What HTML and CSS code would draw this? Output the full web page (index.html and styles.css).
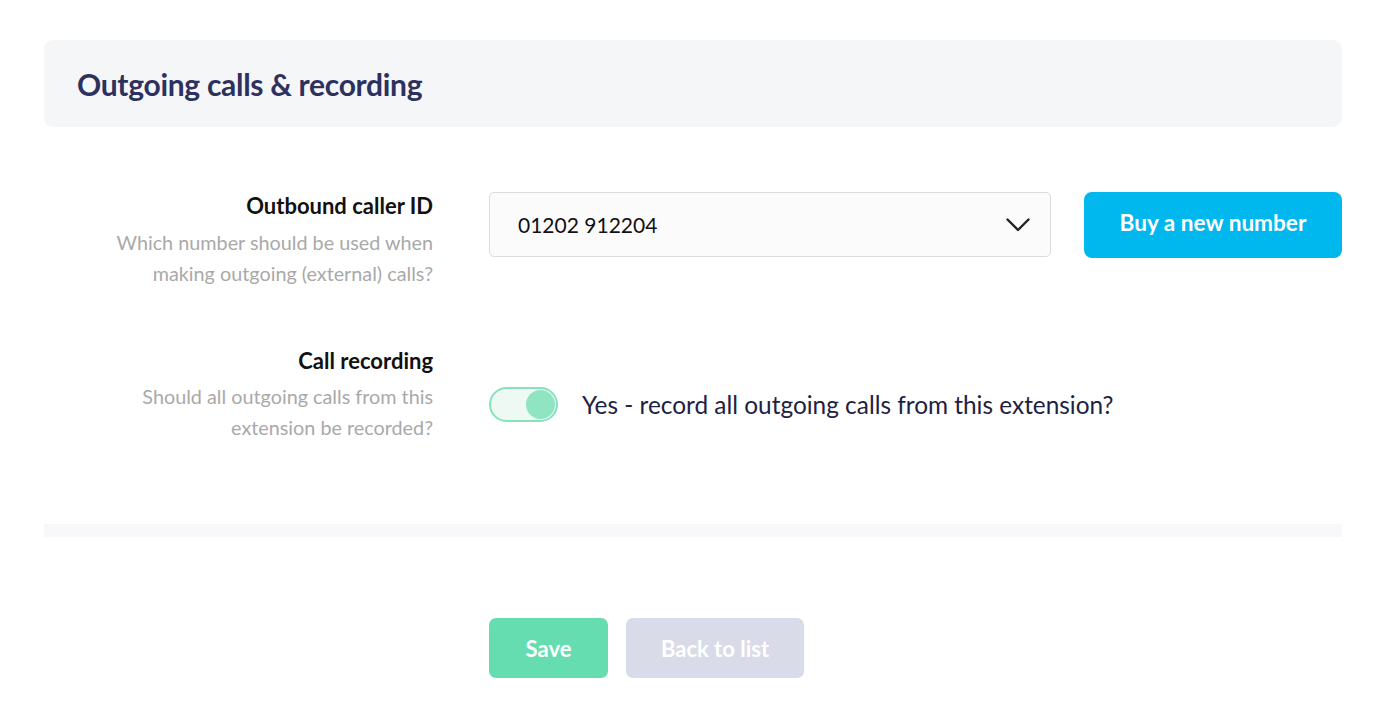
FILE: index.html
```html
<!DOCTYPE html>
<html lang="en">
<head>
<meta charset="utf-8">
<title>Outgoing calls &amp; recording</title>
<link rel="stylesheet" href="styles.css">
</head>
<body>
<div class="page">
  <div class="section-head">
    <h2 class="section-title">Outgoing calls &amp; recording</h2>
  </div>

  <div class="form">
    <div class="row row-caller">
      <div class="label-col">
        <div class="label">Outbound caller ID</div>
        <div class="desc">Which number should be used when<br>making outgoing (external) calls?</div>
      </div>
      <div class="control-col">
        <div class="select">
          <span class="select-value">01202 912204</span>
          <svg class="chevron" width="24" height="14" viewBox="0 0 24 14"><path d="M1.5 1.5 L12 12 L22.5 1.5" fill="none" stroke="#222" stroke-width="2.4" stroke-linecap="round" stroke-linejoin="round"/></svg>
        </div>
        <button class="btn btn-blue">Buy a new number</button>
      </div>
    </div>

    <div class="row row-record">
      <div class="label-col">
        <div class="label">Call recording</div>
        <div class="desc">Should all outgoing calls from this<br>extension be recorded?</div>
      </div>
      <div class="control-col toggle-col">
        <div class="toggle"><span class="knob"></span></div>
        <span class="toggle-text">Yes - record all outgoing calls from this extension?</span>
      </div>
    </div>
  </div>

  <div class="strip"></div>

  <div class="actions">
    <button class="btn btn-save">Save</button>
    <button class="btn btn-back">Back to list</button>
  </div>
</div>
</body>
</html>
```

FILE: styles.css
```css
* { box-sizing: border-box; }
html, body { margin: 0; padding: 0; background: #ffffff; }
body { font-family: "Lato", "Liberation Sans", sans-serif; color: #111; }

.page { padding: 40px 58px 0 44px; }

.section-head {
  background: #f5f6f8;
  border-radius: 9px;
  height: 87px;
  display: flex;
  align-items: center;
  padding-left: 33px;
}
.section-title {
  margin: 0;
  font-size: 30px;
  font-weight: 700;
  color: #2d3160;
  letter-spacing: -0.3px;
}

.form { padding-top: 65px; }

.row {
  display: grid;
  grid-template-columns: 389px 1fr;
  column-gap: 56px;
  align-items: start;
}
.row-record { margin-top: 58px; }

.label-col { text-align: right; }
.label {
  font-size: 22px;
  font-weight: 700;
  color: #111;
  line-height: 28px;
}
.desc {
  font-size: 19.8px;
  color: #a9a9a9;
  line-height: 31px;
  margin-top: 7px;
}
.row-record .desc { margin-top: 6px; }

.control-col { display: flex; align-items: flex-start; gap: 33px; }

.select {
  flex: 1;
  height: 65px;
  border: 1px solid #dcdcdc;
  border-radius: 5px;
  background: #fbfbfb;
  display: flex;
  align-items: center;
  justify-content: space-between;
  padding: 0 20px 0 28px;
}
.select-value { font-size: 21px; color: #111; }

.btn {
  border: 0;
  font-family: inherit;
  font-weight: 700;
  color: #fff;
  font-size: 22px;
  cursor: pointer;
}
.btn-blue {
  width: 258px;
  height: 66px;
  background: #00b7ee;
  border-radius: 8px;
  font-size: 22.6px;
  padding-bottom: 6px;
}

.toggle-col { align-items: center; gap: 24px; padding-top: 40px; }
.toggle {
  width: 69px;
  height: 35px;
  border: 2px solid #86e2bd;
  background: #eef9f4;
  border-radius: 18px;
  position: relative;
  flex: none;
}
.knob {
  position: absolute;
  right: 1px;
  top: 1px;
  width: 29px;
  height: 29px;
  border-radius: 50%;
  background: #8fe4c1;
}
.toggle-text { font-size: 24.4px; color: #1e2242; }

.strip {
  margin-top: 81px;
  height: 13px;
  background: #f8f8fb;
}

.actions {
  display: flex;
  gap: 18px;
  margin-top: 81px;
  padding-left: 445px;
}
.btn-save {
  width: 119px;
  height: 60px;
  background: #66ddb0;
  border-radius: 7px;
}
.btn-back {
  width: 178px;
  height: 60px;
  background: #d9dbe8;
  border-radius: 7px;
}
```
